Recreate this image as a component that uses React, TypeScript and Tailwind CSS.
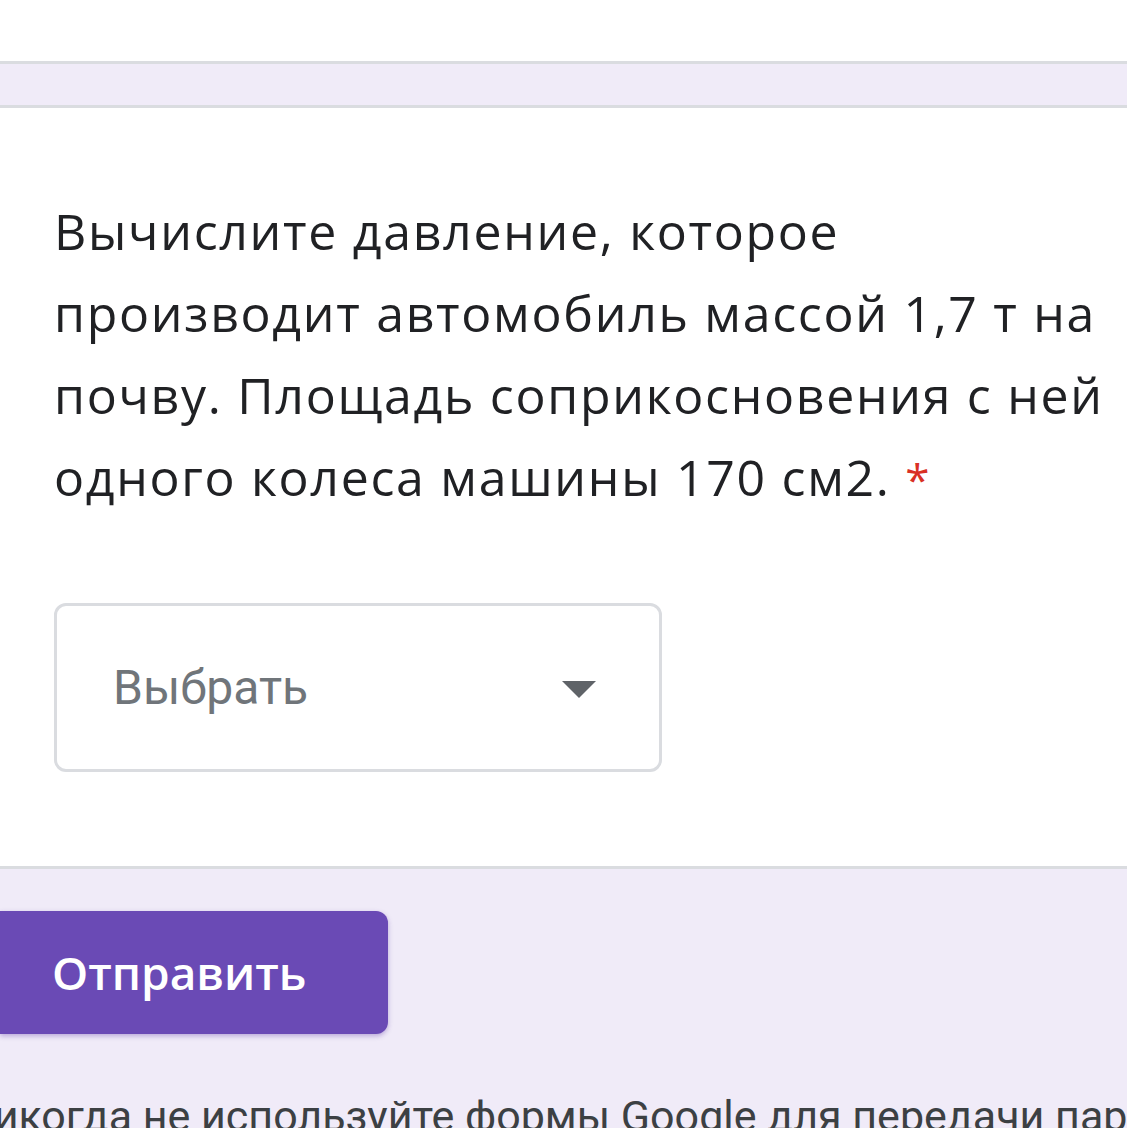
const App = () => {
  return (
    <div className="h-[1128px] w-full overflow-hidden bg-[#f0ebf8] font-['Open_Sans',sans-serif]">
      {/* bottom of the previous card */}
      <div className="h-[64px] bg-white border-b-[3px] border-[#dadce0]" />
      <div className="h-[41px]" />

      {/* question card */}
      <section className="bg-white border-y-[3px] border-[#dadce0] pl-[54px] pt-[82px] pb-[94px]">
        <p className="text-[50px] leading-[82px] tracking-[1.7px] text-[#202124] whitespace-nowrap">
          Вычислите давление, которое
          <br />
          производит автомобиль массой 1,7 т на
          <br />
          почву. Площадь соприкосновения с ней
          <br />
          одного колеса машины 170 см2. <span className="text-[44px] leading-[0] text-[#d93025]">*</span>
        </p>

        <div className="mt-[85px] w-[608px] h-[169px] border-[3px] border-[#dadce0] rounded-[12px] flex items-center justify-between pl-[56px] pr-[63px]">
          <span className="font-['Roboto',sans-serif] text-[48px] text-[#70757a]">Выбрать</span>
          <svg width="34" height="17" viewBox="0 0 34 17" className="mt-[3px]">
            <path d="M0 0 L34 0 L17 17 Z" fill="#5f6368" />
          </svg>
        </div>
      </section>

      {/* submit + footer */}
      <div className="pt-[42px]">
        <button className="block w-[388px] h-[123px] rounded-r-[12px] bg-[#6a4ab5] pl-[52px] text-left text-[46px] font-semibold text-white shadow-[0_2px_5px_rgba(80,40,160,0.35)]">
          Отправить
        </button>
        <p className="-ml-[37px] mt-[58px] whitespace-nowrap font-['Roboto',sans-serif] text-[43px] leading-[48px] text-[#3c4043]">
          Никогда не используйте формы Google для передачи паролей.
        </p>
      </div>
    </div>
  );
};

export default App;
